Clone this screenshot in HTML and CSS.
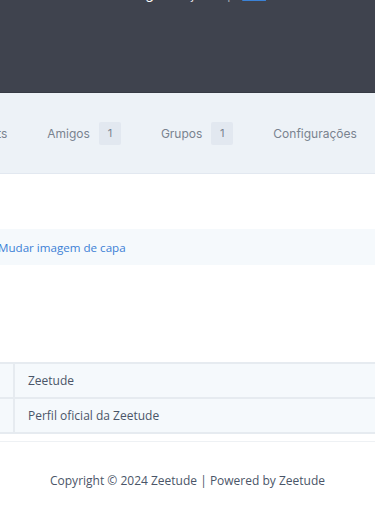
FILE: index.html
```html
<!DOCTYPE html>
<html lang="pt-BR">
<head>
    <meta charset="UTF-8">
    <meta name="viewport" content="width=device-width, initial-scale=1.0">
    <title>Zeetude - Perfil</title>
    <link rel="stylesheet" href="styles.css">
</head>
<body>
    <header class="cover">
        <p class="cover-text">Programação<span class="sep">|</span><a href="#">Sair</a></p>
    </header>
    <nav class="profile-nav">
        <div class="nav-inner">
            <a href="#" class="nav-item">Posts</a>
            <a href="#" class="nav-item">Amigos <span class="badge">1</span></a>
            <a href="#" class="nav-item">Grupos <span class="badge">1</span></a>
            <a href="#" class="nav-item">Configurações</a>
        </div>
    </nav>
    <div class="cover-actions">
        <a href="#" class="cover-link">Mudar imagem de capa</a>
    </div>
    <table class="info-table">
        <tr>
            <th></th>
            <td>Zeetude</td>
        </tr>
        <tr>
            <th></th>
            <td>Perfil oficial da Zeetude</td>
        </tr>
    </table>
    <footer>
        <p>Copyright © 2024 Zeetude | Powered by Zeetude</p>
    </footer>
</body>
</html>
```

FILE: styles.css
```css
body {
    margin: 0;
    padding: 0;
    font-family: "Open Sans", sans-serif;
    background-color: #fff;
    overflow: hidden;
}
.cover {
    height: 92px;
    background-color: #3f434e;
    border-bottom: 1px solid #363a44;
    overflow: hidden;
}
.cover-text {
    margin: -14px 0 0 0;
    padding-left: 123px;
    font-family: Inter, sans-serif;
    font-size: 14px;
    line-height: 16px;
    color: #fff;
    white-space: nowrap;
}
.cover-text .sep {
    margin: 0 11px 0 15px;
    color: #a0a6b1;
}
.cover-text a {
    font-size: 13px;
    color: #3b82d6;
    text-decoration: underline;
}
.profile-nav {
    height: 80px;
    background-color: #edf2f7;
    border-bottom: 1px solid #e2e8f0;
    display: flex;
    align-items: center;
    overflow: hidden;
}
.nav-inner {
    display: flex;
    align-items: center;
    margin-left: -44px;
    white-space: nowrap;
}
.nav-item {
    display: flex;
    align-items: center;
    padding: 0 20px;
    font-family: Inter, sans-serif;
    font-size: 12px;
    color: #79838f;
    text-decoration: none;
}
.badge {
    display: inline-block;
    width: 22px;
    height: 23px;
    line-height: 23px;
    margin-left: 9px;
    border-radius: 2px;
    background-color: #e2e8f0;
    text-align: center;
    font-size: 11px;
    color: #79838f;
}
.cover-actions {
    margin-top: 55px;
    height: 36px;
    background-color: #f5f9fc;
    display: flex;
    align-items: center;
    overflow: hidden;
}
.cover-link {
    margin-left: -2px;
    font-size: 11.6px;
    color: #3b7fd6;
    text-decoration: none;
    white-space: nowrap;
}
.info-table {
    margin-top: 97px;
    width: 100%;
    border-collapse: collapse;
    border-top: 2px solid #e6ebf0;
}
.info-table th,
.info-table td {
    height: 33px;
    background-color: #f5f9fc;
    border-bottom: 2px solid #e6ebf0;
    font-size: 12px;
    font-weight: normal;
    color: #4a5568;
    text-align: left;
    padding: 0 13px;
}
.info-table th {
    width: 0;
    padding: 0 6px 0 7px;
    border-right: 2px solid #e6ebf0;
}
footer {
    margin-top: 7px;
    border-top: 1px solid #eef1f4;
    text-align: center;
    padding: 30px 0;
}
footer p {
    margin: 0;
    font-size: 12px;
    color: #4a5568;
}
```
